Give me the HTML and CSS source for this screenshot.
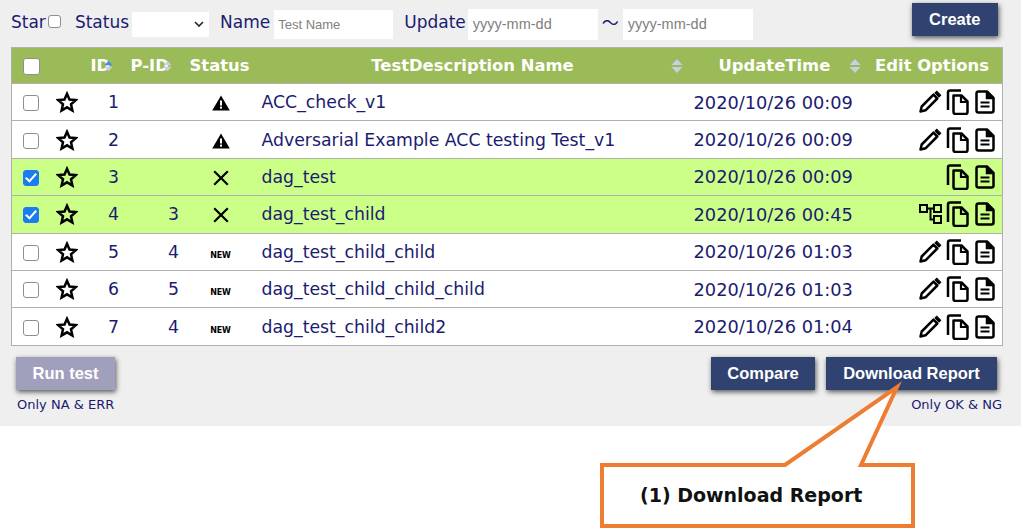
FILE: index.html
```html
<!DOCTYPE html>
<html lang="en">
<head>
    <meta charset="UTF-8">
    <title>Test List</title>
    <link rel="stylesheet" href="styles.css">
</head>
<body>
    <svg class="icon-defs" width="0" height="0">
        <symbol id="i-star" viewBox="0 0 22 22"><path d="M11 2.800l2.500 5.700 6.300.6-4.800 4.200 1.400 6.200L11 16.300l-5.400 3.200L7 13.300 2.200 9.100l6.300-.6z" fill="none" stroke="#000" stroke-width="2.500" stroke-linejoin="miter"/></symbol>
        <symbol id="i-warn" viewBox="0 0 18 16"><path d="M9 .5L17.800 15.500H.2z" fill="#000"/><rect x="8" y="5.500" width="2" height="5" fill="#fff"/><rect x="8" y="11.600" width="2" height="2" fill="#fff"/></symbol>
        <symbol id="i-x" viewBox="0 0 16 16"><path d="M1.200 1.200L14.800 14.800M14.800 1.200L1.200 14.800" stroke="#000" stroke-width="2.200" fill="none"/></symbol>
        <symbol id="i-pencil" viewBox="0 0 24 24"><path d="M2.500 21.500l1.200-5L15.500 4.700l3.800 3.800L7.500 20.300z" fill="none" stroke="#000" stroke-width="2.500" stroke-linejoin="round"/><path d="M17.200 3l1.600-1.600 3.800 3.800L21 6.800z" fill="#000" stroke="#000" stroke-width="1.200"/></symbol>
        <symbol id="i-copy" viewBox="0 0 24 26"><path d="M2.500 21V3.500q0-2 2-2h11" fill="none" stroke="#000" stroke-width="2.500"/><path d="M8 6.500h8l6 6v10.500q0 2-2 2h-10q-2 0-2-2z" fill="none" stroke="#000" stroke-width="2.500" stroke-linejoin="round"/><path d="M15.500 6.500v6.500h6.500" fill="none" stroke="#000" stroke-width="2.200"/></symbol>
        <symbol id="i-doc" viewBox="0 0 20 24"><path d="M3.500 1.500h8.500l6.500 6.500v12.500q0 2-2 2h-13q-2 0-2-2v-17q0-2 2-2z" fill="none" stroke="#000" stroke-width="2.500" stroke-linejoin="round"/><path d="M11.500 2v6.500h6.500" fill="#000" stroke="#000" stroke-width="1.500"/><path d="M5.500 12.500h9M5.500 16.500h9" stroke="#000" stroke-width="2"/></symbol>
        <symbol id="i-tree" viewBox="0 0 23 20"><path d="M8 4.500h7M11.500 4.500v11h3.500" fill="none" stroke="#000" stroke-width="2"/><rect x="1" y="1" width="7" height="7" fill="none" stroke="#000" stroke-width="2"/><rect x="15" y="1" width="7" height="7" fill="none" stroke="#000" stroke-width="2"/><rect x="15" y="12" width="7" height="7" fill="none" stroke="#000" stroke-width="2"/></symbol>
        <symbol id="i-sort" viewBox="0 0 12 16"><path d="M6 1l5.500 6H.5z" fill="currentColor"/><path d="M6 15l5.500-6H.5z" fill="currentColor"/></symbol>
        <symbol id="i-sort-on" viewBox="0 0 12 16"><path d="M6 1l5.500 6H.5z" fill="#3f8fe8"/><path d="M6 15l5.500-6H.5z" fill="#c9cfe0"/></symbol>
    </svg>

    <div class="panel">
        <!-- filter bar -->
        <div class="filters">
            <label class="filter star-filter"><span class="filter-label">Star</span><input type="checkbox" class="check"></label>
            <label class="filter status-filter"><span class="filter-label">Status</span>
                <span class="select-box">
                    <svg width="10" height="6" viewBox="0 0 10 6"><path d="M1 1l4 4 4-4" fill="none" stroke="#222" stroke-width="1.600"/></svg>
                </span>
            </label>
            <label class="filter name-filter"><span class="filter-label">Name</span><input type="text" class="text-input name-input" placeholder="Test Name"></label>
            <label class="filter update-filter"><span class="filter-label">Update</span><input type="text" class="text-input date-input" placeholder="yyyy-mm-dd"></label>
            <span class="tilde">～</span>
            <input type="text" class="text-input date-input date-to" placeholder="yyyy-mm-dd">
            <button class="btn create-btn">Create</button>
        </div>

        <table class="test-table">
            <colgroup>
                <col class="c-check"><col class="c-star"><col class="c-id"><col class="c-pid"><col class="c-status"><col class="c-name"><col class="c-time"><col class="c-opts">
            </colgroup>
            <thead>
                <tr>
                    <th><input type="checkbox" class="check head-check"></th>
                    <th></th>
                    <th class="th-id">ID<svg class="sort tight"><use href="#i-sort-on"/></svg></th>
                    <th class="th-pid">P-ID<svg class="sort tight"><use href="#i-sort"/></svg></th>
                    <th class="th-status">Status</th>
                    <th class="th-name"><span>TestDescription Name</span><svg class="sort"><use href="#i-sort"/></svg></th>
                    <th class="th-time"><span>UpdateTime</span><svg class="sort"><use href="#i-sort"/></svg></th>
                    <th class="th-opts">Edit Options</th>
                </tr>
            </thead>
            <tbody>
                <tr>
                    <td><input type="checkbox" class="check"></td>
                    <td class="star-cell"><svg class="star"><use href="#i-star"/></svg></td>
                    <td>1</td><td></td>
                    <td class="status"><svg class="warn"><use href="#i-warn"/></svg></td>
                    <td class="name">ACC_check_v1</td>
                    <td class="time">2020/10/26 00:09</td>
                    <td class="opts"><svg class="pencil"><use href="#i-pencil"/></svg><svg class="copy"><use href="#i-copy"/></svg><svg class="doc"><use href="#i-doc"/></svg></td>
                </tr>
                <tr>
                    <td><input type="checkbox" class="check"></td>
                    <td class="star-cell"><svg class="star"><use href="#i-star"/></svg></td>
                    <td>2</td><td></td>
                    <td class="status"><svg class="warn"><use href="#i-warn"/></svg></td>
                    <td class="name">Adversarial Example ACC testing Test_v1</td>
                    <td class="time">2020/10/26 00:09</td>
                    <td class="opts"><svg class="pencil"><use href="#i-pencil"/></svg><svg class="copy"><use href="#i-copy"/></svg><svg class="doc"><use href="#i-doc"/></svg></td>
                </tr>
                <tr class="selected">
                    <td><input type="checkbox" class="check" checked></td>
                    <td class="star-cell"><svg class="star"><use href="#i-star"/></svg></td>
                    <td>3</td><td></td>
                    <td class="status"><svg class="cross"><use href="#i-x"/></svg></td>
                    <td class="name">dag_test</td>
                    <td class="time">2020/10/26 00:09</td>
                    <td class="opts"><svg class="copy"><use href="#i-copy"/></svg><svg class="doc"><use href="#i-doc"/></svg></td>
                </tr>
                <tr class="selected">
                    <td><input type="checkbox" class="check" checked></td>
                    <td class="star-cell"><svg class="star"><use href="#i-star"/></svg></td>
                    <td>4</td><td>3</td>
                    <td class="status"><svg class="cross"><use href="#i-x"/></svg></td>
                    <td class="name">dag_test_child</td>
                    <td class="time">2020/10/26 00:45</td>
                    <td class="opts"><svg class="tree"><use href="#i-tree"/></svg><svg class="copy"><use href="#i-copy"/></svg><svg class="doc"><use href="#i-doc"/></svg></td>
                </tr>
                <tr>
                    <td><input type="checkbox" class="check"></td>
                    <td class="star-cell"><svg class="star"><use href="#i-star"/></svg></td>
                    <td>5</td><td>4</td>
                    <td class="status"><span class="new-tag">NEW</span></td>
                    <td class="name">dag_test_child_child</td>
                    <td class="time">2020/10/26 01:03</td>
                    <td class="opts"><svg class="pencil"><use href="#i-pencil"/></svg><svg class="copy"><use href="#i-copy"/></svg><svg class="doc"><use href="#i-doc"/></svg></td>
                </tr>
                <tr>
                    <td><input type="checkbox" class="check"></td>
                    <td class="star-cell"><svg class="star"><use href="#i-star"/></svg></td>
                    <td>6</td><td>5</td>
                    <td class="status"><span class="new-tag">NEW</span></td>
                    <td class="name">dag_test_child_child_child</td>
                    <td class="time">2020/10/26 01:03</td>
                    <td class="opts"><svg class="pencil"><use href="#i-pencil"/></svg><svg class="copy"><use href="#i-copy"/></svg><svg class="doc"><use href="#i-doc"/></svg></td>
                </tr>
                <tr>
                    <td><input type="checkbox" class="check"></td>
                    <td class="star-cell"><svg class="star"><use href="#i-star"/></svg></td>
                    <td>7</td><td>4</td>
                    <td class="status"><span class="new-tag">NEW</span></td>
                    <td class="name">dag_test_child_child2</td>
                    <td class="time">2020/10/26 01:04</td>
                    <td class="opts"><svg class="pencil"><use href="#i-pencil"/></svg><svg class="copy"><use href="#i-copy"/></svg><svg class="doc"><use href="#i-doc"/></svg></td>
                </tr>
            </tbody>
        </table>

        <!-- actions under the table -->
        <div class="actions">
            <div class="action-left">
                <button class="btn run-btn">Run test</button>
                <p class="hint">Only NA &amp; ERR</p>
            </div>
            <div class="action-right">
                <div class="action-btns">
                    <button class="btn compare-btn">Compare</button>
                    <button class="btn download-btn">Download Report</button>
                </div>
                <p class="hint">Only OK &amp; NG</p>
            </div>
        </div>
    </div>

    <!-- annotation over the screenshot -->
    <svg class="callout-shape" width="1021" height="531" viewBox="0 0 1021 531">
        <path d="M602 465H785L897 387L861 465H913V526H602z" fill="#fff" stroke="#ed7d31" stroke-width="4"/>
    </svg>
    <div class="callout-text">(1) Download Report</div>
</body>
</html>
```

FILE: styles.css
```css
html, body {
    margin: 0;
    height: 531px;
    overflow: hidden;
}

body {
    position: relative;
    background-color: #fff;
    color: #1b1b6f;
    font-family: "DejaVu Sans", sans-serif;
}

.icon-defs {
    display: block;
    height: 0;
}

.panel {
    height: 426px;
    box-sizing: border-box;
    padding: 2px 19px 0 11px;
    background-color: #efefef;
}

/* filter bar */
.filters {
    display: flex;
    align-items: center;
    height: 45px;
    font-size: 17px;
}

.filter {
    display: flex;
    align-items: center;
}

.filter-label {
    margin-bottom: 6px;
}

.check {
    appearance: none;
    position: relative;
    box-sizing: border-box;
    width: 13px;
    height: 13px;
    margin: 0;
    border: 1.500px solid #8f8f8f;
    border-radius: 3px;
    background-color: #fff;
}

.check:checked {
    border-color: #1a7cf0;
    background-color: #1a7cf0;
}

.check:checked::after {
    content: "";
    position: absolute;
    left: 4px;
    top: 0;
    width: 4px;
    height: 9px;
    border: solid #fff;
    border-width: 0 2.500px 2.500px 0;
    transform: rotate(42deg);
}

.star-filter .check {
    margin-left: 2px;
    margin-right: 14px;
    margin-bottom: 6px;
}

.select-box {
    display: flex;
    align-items: center;
    justify-content: flex-end;
    width: 77px;
    height: 25px;
    margin-left: 3px;
    margin-right: 11px;
    margin-bottom: 1px;
    padding-right: 5px;
    box-sizing: border-box;
    background-color: #fff;
}

.text-input {
    box-sizing: border-box;
    height: 31px;
    margin-bottom: 1px;
    padding: 0 5px;
    border: none;
    background-color: #fff;
    font-family: "Liberation Sans", sans-serif;
    font-size: 14.500px;
}

.text-input::placeholder {
    color: #808080;
}

.name-input {
    width: 119px;
    height: 29px;
    margin-left: 4px;
    margin-right: 11px;
    padding: 0 4px;
    font-size: 13px;
}

.date-input {
    width: 130px;
    margin-left: 2px;
}

.tilde {
    width: 25px;
    margin-bottom: 6px;
    font-family: "Noto Sans CJK JP", sans-serif;
    font-size: 17px;
    text-align: center;
}

.date-to {
    margin-left: 0;
}

.btn {
    border: none;
    background-color: #2f4270;
    color: #fff;
    font-family: "Liberation Sans", sans-serif;
    font-size: 16.500px;
    font-weight: bold;
    box-shadow: 1px 2px 5px #555;
    padding: 0;
    height: 33px;
}

.create-btn {
    width: 86px;
    margin-left: 159px;
    margin-bottom: 11px;
}

/* table */
.test-table {
    width: 991px;
    table-layout: fixed;
    border-collapse: collapse;
    background-color: #fff;
    font-size: 17.300px;
}

.test-table, .test-table td {
    border: 1px solid #b0b0b0;
}

.test-table td {
    border-left: none;
    border-right: none;
    height: 36.400px;
    padding: 0;
    text-align: center;
}

.c-check { width: 39px; }
.c-star { width: 35px; }
.c-id { width: 56px; }
.c-pid { width: 64px; }
.c-status { width: 57px; }
.c-name { width: 432px; }
.c-time { width: 176px; }
.c-opts { width: 132px; }

.test-table th {
    height: 35px;
    padding: 0;
    background-color: #9bbb59;
    color: #fff;
    font-size: 16.400px;
    text-align: center;
    white-space: nowrap;
}

.test-table .th-id {
    padding-left: 5px;
    text-align: left;
}

.test-table .th-pid {
    text-align: left;
    text-indent: -11px;
}

.test-table .th-status {
    text-align: left;
    text-indent: -16px;
}

.test-table .th-opts {
    padding-right: 13px;
    text-align: right;
}

.head-check {
    width: 17px;
    height: 17px;
    vertical-align: middle;
}

.test-table .th-name {
    position: relative;
    padding-right: 12px;
}

.test-table .th-time {
    position: relative;
    padding-left: 24px;
    text-align: left;
}

.sort {
    width: 9px;
    height: 12px;
    color: #c9cfe0;
    vertical-align: -1px;
}

.tight {
    margin-left: -6px;
}

.th-name .sort, .th-time .sort {
    position: absolute;
    top: 10px;
    width: 12px;
    height: 16px;
}

.th-name .sort { right: 12px; }
.th-time .sort { right: 10px; }

.test-table .name {
    text-align: left;
    text-indent: -1px;
}

.test-table .time {
    font-size: 17.800px;
    text-align: left;
    text-indent: -1px;
    white-space: nowrap;
}

.selected td {
    background-color: #ccff88;
}

td svg {
    vertical-align: middle;
}

td .check {
    vertical-align: middle;
    width: 16px;
    height: 16px;
}

.test-table .star-cell {
    padding-right: 3px;
}

.test-table .status {
    padding-right: 27px;
}

.star { width: 22px; height: 22px; }
.warn { width: 18px; height: 16px; }
.cross { width: 16px; height: 16px; }
.pencil { width: 24px; height: 24px; margin-right: 3px; }
.copy { width: 25px; height: 26px; }
.doc { width: 20px; height: 24px; margin-left: 5px; margin-right: 7px; }
.tree { width: 23px; height: 20px; margin-right: 3px; }

.test-table .opts {
    text-align: right;
    white-space: nowrap;
}

.new-tag {
    display: inline-block;
    color: #000;
    font-family: "DejaVu Sans", sans-serif;
    font-size: 8px;
    font-weight: bold;
    letter-spacing: -0.200px;
}

/* actions */
.actions {
    display: flex;
    justify-content: space-between;
    padding-top: 11px;
}

.action-left {
    padding-left: 5px;
}

.action-right {
    display: flex;
    flex-direction: column;
    align-items: flex-end;
}

.action-btns {
    display: flex;
    gap: 11px;
    margin-right: 5px;
}

.run-btn {
    width: 99px;
    background-color: #a09fbc;
}

.compare-btn { width: 104px; }
.download-btn { width: 171px; }

.hint {
    margin: 7px 0 0;
    font-size: 13px;
    line-height: 16px;
}

.action-left .hint {
    margin-left: 1px;
}

/* annotation */
.callout-shape {
    position: absolute;
    left: 0;
    top: 0;
}

.callout-text {
    position: absolute;
    left: 640px;
    top: 482px;
    color: #111;
    font-size: 19px;
    font-weight: bold;
    line-height: 26px;
}
```
